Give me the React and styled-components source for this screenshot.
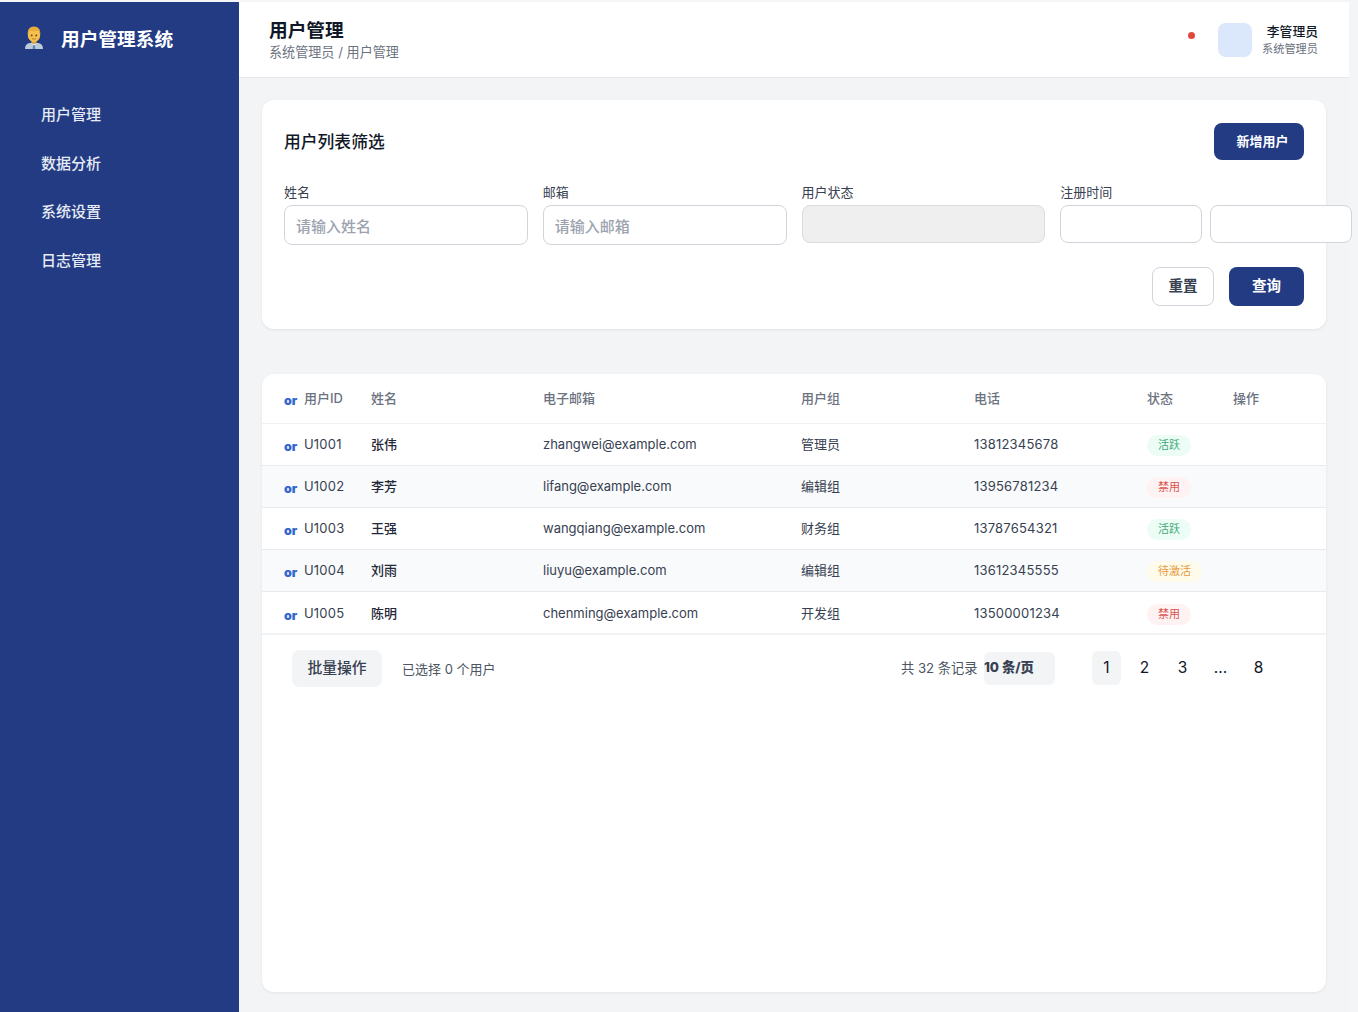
import React from "react";
import styled, { createGlobalStyle, css } from "styled-components";

const NAV_ITEMS = ["用户管理", "数据分析", "系统设置", "日志管理"];

const USERS = [
  { id: "U1001", name: "张伟", email: "zhangwei@example.com", group: "管理员", phone: "13812345678", status: "active" },
  { id: "U1002", name: "李芳", email: "lifang@example.com", group: "编辑组", phone: "13956781234", status: "disabled" },
  { id: "U1003", name: "王强", email: "wangqiang@example.com", group: "财务组", phone: "13787654321", status: "active" },
  { id: "U1004", name: "刘雨", email: "liuyu@example.com", group: "编辑组", phone: "13612345555", status: "pending" },
  { id: "U1005", name: "陈明", email: "chenming@example.com", group: "开发组", phone: "13500001234", status: "disabled" },
];

const STATUS = {
  active: { label: "活跃", bg: "#ecfdf5", color: "#3fa877" },
  disabled: { label: "禁用", bg: "#fef2f2", color: "#d9534f" },
  pending: { label: "待激活", bg: "#fffbeb", color: "#e59a3a" },
};

const COLUMNS = "87px 172px 258px 173px 173px 86px 115px";

const App = () => (
  <>
    <GlobalStyle />
    <Page>
      <Sidebar>
        <Logo>
          <LogoIcon />
          <LogoText>用户管理系统</LogoText>
        </Logo>
        <Nav>
          {NAV_ITEMS.map((item) => (
            <NavItem key={item}>{item}</NavItem>
          ))}
        </Nav>
      </Sidebar>

      <Main>
        <Header>
          <HeaderLeft>
            <PageTitle>用户管理</PageTitle>
            <Breadcrumb>系统管理员 / 用户管理</Breadcrumb>
          </HeaderLeft>
          <HeaderRight>
            <NoticeDot />
            <Avatar />
            <UserInfo>
              <UserName>李管理员</UserName>
              <UserRole>系统管理员</UserRole>
            </UserInfo>
          </HeaderRight>
        </Header>

        <Content>
          <FilterCard>
            <FilterTop>
              <CardTitle>用户列表筛选</CardTitle>
              <AddButton>新增用户</AddButton>
            </FilterTop>
            <FilterGrid>
              <Field>
                <Label>姓名</Label>
                <TextInput placeholder="请输入姓名" />
              </Field>
              <Field>
                <Label>邮箱</Label>
                <TextInput placeholder="请输入邮箱" />
              </Field>
              <Field>
                <Label>用户状态</Label>
                <DisabledBox />
              </Field>
              <Field>
                <Label>注册时间</Label>
                <DateRow>
                  <DateBox />
                  <DateBox />
                </DateRow>
              </Field>
            </FilterGrid>
            <FilterActions>
              <ResetButton>重置</ResetButton>
              <QueryButton>查询</QueryButton>
            </FilterActions>
          </FilterCard>

          <TableCard>
            <HeadRow>
              <IdCell><SortMark>or</SortMark>用户ID</IdCell>
              <div>姓名</div>
              <div>电子邮箱</div>
              <div>用户组</div>
              <div>电话</div>
              <div>状态</div>
              <div>操作</div>
            </HeadRow>
            {USERS.map((user, index) => (
              <Row key={user.id} striped={index % 2 === 1} last={index === USERS.length - 1}>
                <IdCell><SortMark>or</SortMark><Digits>{user.id}</Digits></IdCell>
                <NameCell>{user.name}</NameCell>
                <div>{user.email}</div>
                <div>{user.group}</div>
                <Digits>{user.phone}</Digits>
                <StatusCell>
                  <Badge status={user.status}>{STATUS[user.status].label}</Badge>
                </StatusCell>
                <div />
              </Row>
            ))}
            <TableFooter>
              <FooterLeft>
                <BatchButton>批量操作</BatchButton>
                <SelectedText>已选择 0 个用户</SelectedText>
              </FooterLeft>
              <FooterRight>
                <TotalText>共 32 条记录</TotalText>
                <PageSize>10 条/页</PageSize>
                <Pager>
                  <PageButton active>1</PageButton>
                  <PageButton>2</PageButton>
                  <PageButton>3</PageButton>
                  <PageButton>...</PageButton>
                  <PageButton>8</PageButton>
                </Pager>
              </FooterRight>
            </TableFooter>
          </TableCard>
        </Content>
      </Main>
    </Page>
  </>
);

// Man office worker emoji
const LogoIcon = () => (
  <svg width="20" height="23" viewBox="0 0 20 23" style={{ flexShrink: 0 }}>
    <path d="M1 23c0-3.400 1.400-5.200 4.500-6h9c3.100.8 4.500 2.600 4.500 6z" fill="#bccbdb" />
    <path d="M7 16.500h6l-3 3.500z" fill="#eef2f6" />
    <path d="M9.200 19h1.600l.6 4H8.600z" fill="#5f86b5" />
    <rect x="7.600" y="13" width="4.800" height="5" rx="2" fill="#dc9f3a" />
    <ellipse cx="10" cy="9" rx="6.200" ry="7" fill="#f6c04d" />
    <path d="M3.700 9C3.200 3.400 6 .6 10 .6s6.800 2.800 6.300 8.400c-.4-2.400-1.300-3.800-2.700-4.400-2.200.8-5 .8-7.200 0C5 5.200 4.100 6.600 3.700 9z" fill="#e6ad3c" />
    <circle cx="7.700" cy="9.400" r=".9" fill="#5b3a1a" />
    <circle cx="12.300" cy="9.400" r=".9" fill="#5b3a1a" />
    <path d="M8 12.600c1.200.7 2.800.7 4 0" stroke="#a8662a" strokeWidth=".7" fill="none" />
  </svg>
);

const GlobalStyle = createGlobalStyle`
  * {
    box-sizing: border-box;
  }

  html, body {
    margin: 0;
    padding: 0;
    background: #f4f5f6;
    overflow: hidden;
  }

  body {
    font-family: Inter, "Noto Sans CJK SC", "Noto Sans", sans-serif;
    color: #1f2937;
  }
`;

const Page = styled.div`
  display: flex;
  width: 1349px;
  height: 1012px;
  padding-top: 2px;
`;

const Sidebar = styled.aside`
  flex: 0 0 239px;
  background: #223b83;
  color: #fff;
`;

const Logo = styled.div`
  display: flex;
  align-items: center;
  gap: 17px;
  height: 74px;
  padding-bottom: 4px;
  padding-left: 24px;
`;

const LogoText = styled.span`
  font-size: 18.7px;
  font-weight: 700;
`;

const Nav = styled.nav`
  display: flex;
  flex-direction: column;
  margin-top: 13px;
`;

const NavItem = styled.a`
  display: flex;
  align-items: center;
  height: 48.7px;
  padding-left: 41px;
  font-size: 15px;
  font-weight: 500;
  color: #e7ebf5;
`;

const Main = styled.div`
  flex: 1;
  min-width: 0;
  display: flex;
  flex-direction: column;
  background: #f3f4f6;
`;

const Header = styled.header`
  display: flex;
  align-items: center;
  justify-content: space-between;
  height: 76px;
  padding: 0 31px 0 30px;
  background: #fff;
  border-bottom: 1px solid #e5e7eb;
`;

const HeaderLeft = styled.div`
  padding-bottom: 3px;
`;

const PageTitle = styled.div`
  font-size: 18.7px;
  line-height: 26px;
  font-weight: 600;
  color: #111827;
`;

const Breadcrumb = styled.div`
  margin-top: 1px;
  font-size: 13.1px;
  line-height: 14px;
  color: #6b7280;
`;

const HeaderRight = styled.div`
  display: flex;
  align-items: center;
`;

const NoticeDot = styled.span`
  position: relative;
  top: -4px;
  width: 7px;
  height: 7px;
  border-radius: 50%;
  background: #e0483e;
  margin-right: 23px;
`;

const Avatar = styled.div`
  width: 34px;
  height: 34px;
  border-radius: 8px;
  background: #dbe7fb;
  margin-right: 10px;
`;

const UserInfo = styled.div`
  padding-top: 1.5px;
  text-align: right;
`;

const UserName = styled.div`
  font-size: 12.8px;
  line-height: 17px;
  font-weight: 500;
  color: #111827;
`;

const UserRole = styled.div`
  margin-top: 1.5px;
  font-size: 11.2px;
  line-height: 17px;
  color: #6b7280;
`;

const Content = styled.main`
  flex: 1;
  min-height: 0;
  display: flex;
  flex-direction: column;
  gap: 45px;
  padding: 22px 23px 20px 23px;
`;

const Card = styled.section`
  background: #fff;
  border-radius: 12px;
  box-shadow: 0 1px 3px rgba(0, 0, 0, 0.07);
`;

const FilterCard = styled(Card)`
  height: 229px;
  padding: 23px 22px;
`;

const FilterTop = styled.div`
  display: flex;
  align-items: center;
  justify-content: space-between;
  height: 37px;
`;

const CardTitle = styled.h2`
  margin: 0 0 2px;
  font-size: 16.8px;
  font-weight: 500;
  color: #111827;
`;

const FilterGrid = styled.div`
  display: grid;
  grid-template-columns: repeat(4, 243.75px);
  gap: 15px;
  margin-top: 23px;
`;

const Field = styled.div`
  display: flex;
  flex-direction: column;
`;

const Label = styled.label`
  font-size: 13px;
  line-height: 18px;
  color: #374151;
  margin-bottom: 4px;
`;

const TextInput = styled.input`
  width: 100%;
  height: 40px;
  padding: 2px 11px 0;
  border: 1px solid #d1d5db;
  border-radius: 8px;
  background: #fff;
  font-family: inherit;
  font-size: 15px;
  font-weight: 500;
  outline: none;

  &::placeholder {
    color: #9ca3af;
    opacity: 1;
  }
`;

const DisabledBox = styled.div`
  height: 38px;
  border: 1px solid #d9dbdf;
  border-radius: 8px;
  background: #efefef;
`;

const DateRow = styled.div`
  display: flex;
  gap: 8px;
`;

const DateBox = styled.div`
  flex: 0 0 142px;
  height: 38px;
  border: 1px solid #d1d5db;
  border-radius: 8px;
  background: #fff;
`;

const FilterActions = styled.div`
  display: flex;
  justify-content: flex-end;
  gap: 15px;
  margin-top: 22px;
`;

const buttonBase = css`
  border-radius: 8px;
  font-family: inherit;
  font-weight: 600;
`;

const AddButton = styled.button`
  ${buttonBase}
  width: 90px;
  height: 37px;
  padding: 0 0 3px 7px;
  border: none;
  background: #223b83;
  color: #fff;
  font-size: 13px;
`;

const ResetButton = styled.button`
  ${buttonBase}
  width: 62px;
  height: 39px;
  padding: 0 0 4px;
  border: 1px solid #d1d5db;
  background: #fff;
  color: #374151;
  font-size: 14.5px;
`;

const QueryButton = styled.button`
  ${buttonBase}
  width: 75px;
  height: 39px;
  padding: 0 0 4px;
  border: none;
  background: #223b83;
  color: #fff;
  font-size: 14.5px;
`;

const TableCard = styled(Card)`
  flex: 1;
  min-height: 0;
`;

const HeadRow = styled.div`
  display: grid;
  grid-template-columns: ${COLUMNS};
  align-items: center;
  height: 50px;
  padding: 0 0 2px 22px;
  border-bottom: 1px solid #f0f1f3;
  font-size: 13px;
  font-weight: 500;
  color: #6b7280;
`;

const Row = styled.div`
  display: grid;
  grid-template-columns: ${COLUMNS};
  align-items: center;
  height: ${(props) => (props.last ? "43px" : "42px")};
  padding: 0 0 ${(props) => (props.last ? "0" : "2px")} 22px;
  background: ${(props) => (props.striped ? "#f9fafb" : "#fff")};
  border-bottom: ${(props) => (props.last ? "2px solid #f1f2f4" : "1px solid #e8eaee")};
  font-size: 13px;
  color: #374151;
`;

const IdCell = styled.div`
  display: flex;
  align-items: center;
  white-space: nowrap;
`;

const SortMark = styled.span`
  width: 20px;
  margin-top: 5px;
  font-size: 12.5px;
  font-weight: 900;
  color: #3467cf;
`;

const Digits = styled.div`
  letter-spacing: 0.2px;
`;

const NameCell = styled.div`
  font-weight: 500;
  color: #1f2937;
`;

const StatusCell = styled.div`
  display: flex;
  padding-top: 4px;
`;

const Badge = styled.span`
  padding: 0 11px;
  font-size: 11px;
  line-height: 21px;
  border-radius: 11px;
  background: ${(props) => STATUS[props.status].bg};
  color: ${(props) => STATUS[props.status].color};
`;

const TableFooter = styled.div`
  display: flex;
  align-items: flex-start;
  justify-content: space-between;
  padding: 15px 53px 0 30px;
`;

const FooterLeft = styled.div`
  display: flex;
  align-items: center;
  gap: 20px;
`;

const BatchButton = styled.button`
  width: 90px;
  height: 37px;
  padding: 0 0 5px;
  border: none;
  border-radius: 8px;
  background: #f3f4f6;
  color: #374151;
  font-family: inherit;
  font-size: 14.8px;
  font-weight: 500;
`;

const SelectedText = styled.span`
  font-size: 13px;
  color: #4b5563;
`;

const FooterRight = styled.div`
  display: flex;
  align-items: flex-start;
`;

const TotalText = styled.span`
  margin-top: 8px;
  width: 83px;
  font-size: 13.2px;
  color: #4b5563;
  white-space: nowrap;
`;

const PageSize = styled.div`
  width: 71px;
  height: 33px;
  margin-top: 2px;
  border-radius: 6px;
  background: #f3f4f6;
  font-size: 13.3px;
  line-height: 30px;
  font-weight: 800;
  color: #374151;
  white-space: nowrap;
`;

const Pager = styled.div`
  display: flex;
  gap: 9px;
  margin-left: 37px;
  margin-top: 1px;
`;

const PageButton = styled.span`
  width: 29px;
  height: 34px;
  padding-bottom: 2px;
  border-radius: 6px;
  display: flex;
  align-items: center;
  justify-content: center;
  font-size: 15.5px;
  color: #111827;
  background: ${(props) => (props.active ? "#f3f4f6" : "transparent")};
`;

export default App;
